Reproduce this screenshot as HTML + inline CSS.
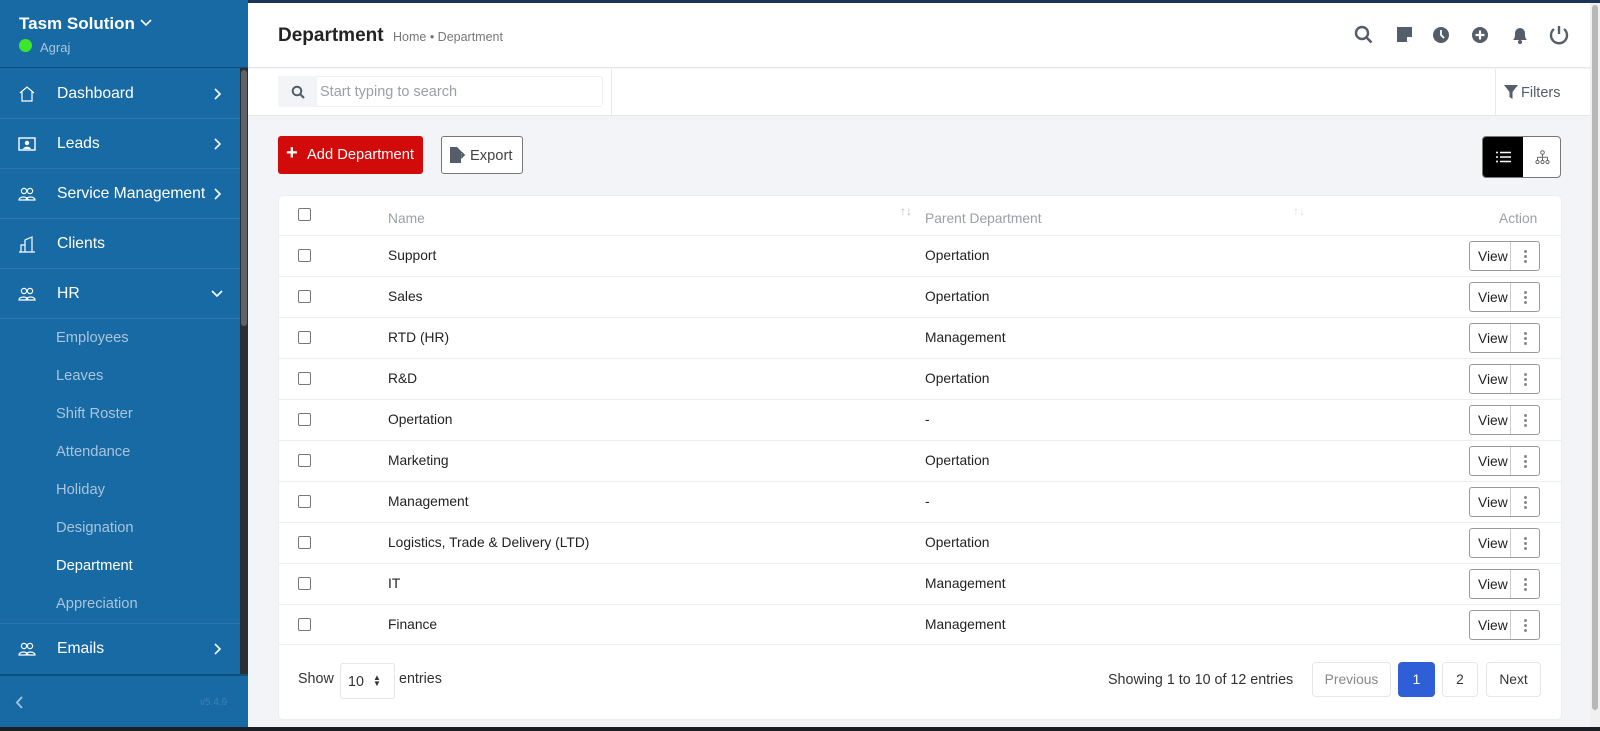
<!DOCTYPE html>
<html><head><meta charset="utf-8"><style>
*{box-sizing:border-box;margin:0;padding:0}
body{width:1600px;height:731px;overflow:hidden;font-family:"Liberation Sans",sans-serif;background:#f2f4f7;position:relative}
.abs{position:absolute}
#sb{left:0;top:0;width:248px;height:731px;background:#176aa3}
.mi{position:absolute;left:0;width:240px;height:50px;border-bottom:1px solid #2a79b0;color:#fff;font-size:15.7px}
.mi span.t{position:absolute;left:57px;top:50%;transform:translateY(-50%)}
.mi svg.ic{position:absolute;left:18px;top:50%;transform:translateY(-50%)}
.mi .ch{position:absolute;left:214px;top:50%;transform:translateY(-50%)}
.sub{position:absolute;left:56px;color:#a9c4dc;font-size:14.7px;transform:translateY(-50%)}
.row{position:absolute;left:278px;width:1284px;height:41px;border-top:1px solid #eceef1;font-size:13.8px;color:#222}
.row .cb{position:absolute;left:20px;top:13px;width:13px;height:13px;border:1px solid #777;border-radius:2px;background:#fff}
.row .n{position:absolute;left:110px;top:12px}
.row .p{position:absolute;left:647px;top:12px}
.row .vb{position:absolute;left:1191px;top:5px;width:71px;height:30px;border:1px solid #9a9a9a;border-radius:3px;background:#fff}
.vb span{position:absolute;left:8px;top:7px;font-size:13.8px}
.vb i{position:absolute;left:40px;top:0;width:1px;height:28px;background:#ccc}
.vb b{position:absolute;left:54px;width:3px;height:3px;border-radius:50%;background:#888}
.pg{position:absolute;top:662px;height:35px;border:1px solid #e4e6ea;border-radius:4px;background:#fff;font-size:13.8px;color:#333;text-align:center;line-height:33px}
</style></head><body>
<div class="abs" style="left:0;top:0;width:1600px;height:3px;background:#1d3358"></div>
<div id="sb" class="abs">
 <div class="abs" style="left:0;top:3px;width:248px;height:65px;border-bottom:1px solid #0f4f7c"></div>
 <div class="abs" style="left:19px;top:14px;color:#fff;font-size:17px;font-weight:bold">Tasm Solution</div>
 <svg class="abs" style="left:140px;top:19px" width="12" height="8" viewBox="0 0 12 8"><path d="M1 1l5 5 5-5" stroke="#fff" stroke-width="1.6" fill="none"/></svg>
 <div class="abs" style="left:19px;top:39px;width:13px;height:13px;border-radius:50%;background:#3ee62a"></div>
 <div class="abs" style="left:40px;top:40px;color:#aac6de;font-size:13px">Agraj</div>
 <div class="mi" style="top:69px"><svg class="ic" width="18" height="18" viewBox="0 0 18 18"><path d="M2 8L9 2l7 6M4 7v9h10V7" stroke="#fff" stroke-width="1.2" fill="none"/></svg><span class="t">Dashboard</span><svg class="ch" width="8" height="12" viewBox="0 0 8 12"><path d="M1 1l5 5-5 5" stroke="#fff" stroke-width="1.6" fill="none"/></svg></div>
 <div class="mi" style="top:119px"><svg class="ic" width="18" height="16" viewBox="0 0 18 16"><rect x="1" y="2" width="16" height="12" stroke="#fff" stroke-width="1.4" fill="none"/><circle cx="9" cy="7" r="2.2" fill="#fff"/><path d="M5 13c1-3 7-3 8 0z" fill="#fff"/></svg><span class="t">Leads</span><svg class="ch" width="8" height="12" viewBox="0 0 8 12"><path d="M1 1l5 5-5 5" stroke="#fff" stroke-width="1.6" fill="none"/></svg></div>
 <div class="mi" style="top:169px"><svg class="ic" width="18" height="16" viewBox="0 0 18 16"><circle cx="6" cy="5" r="2.6" stroke="#fff" stroke-width="1.2" fill="none"/><circle cx="12" cy="5" r="2.6" stroke="#fff" stroke-width="1.2" fill="none"/><path d="M1 14c0-4 9-4 9 0zM8 14c0-4 9-4 9 0z" stroke="#fff" stroke-width="1.2" fill="none"/></svg><span class="t">Service Management</span><svg class="ch" width="8" height="12" viewBox="0 0 8 12"><path d="M1 1l5 5-5 5" stroke="#fff" stroke-width="1.6" fill="none"/></svg></div>
 <div class="mi" style="top:219px"><svg class="ic" width="18" height="18" viewBox="0 0 18 18"><path d="M1 17h16M3 17V10h4v7M7 17V5l7-3v15" stroke="#fff" stroke-width="1.2" fill="none"/></svg><span class="t">Clients</span></div>
 <div class="mi" style="top:269px"><svg class="ic" width="18" height="16" viewBox="0 0 18 16"><circle cx="6" cy="5" r="2.6" stroke="#fff" stroke-width="1.2" fill="none"/><circle cx="12" cy="5" r="2.6" stroke="#fff" stroke-width="1.2" fill="none"/><path d="M1 14c0-4 9-4 9 0zM8 14c0-4 9-4 9 0z" stroke="#fff" stroke-width="1.2" fill="none"/></svg><span class="t">HR</span><svg class="ch" width="12" height="8" viewBox="0 0 12 8" style="left:211px"><path d="M1 1l5 5 5-5" stroke="#fff" stroke-width="1.6" fill="none"/></svg></div>
 <div class="sub" style="top:338px">Employees</div>
 <div class="sub" style="top:376px">Leaves</div>
 <div class="sub" style="top:414px">Shift Roster</div>
 <div class="sub" style="top:452px">Attendance</div>
 <div class="sub" style="top:490px">Holiday</div>
 <div class="sub" style="top:528px">Designation</div>
 <div class="sub" style="top:566px;color:#fff">Department</div>
 <div class="sub" style="top:604px">Appreciation</div>
 <div class="abs" style="left:0;top:623px;width:240px;height:1px;background:#2a79b0"></div>
 <div class="mi" style="top:624px;border:none"><svg class="ic" width="18" height="16" viewBox="0 0 18 16"><circle cx="6" cy="5" r="2.6" stroke="#fff" stroke-width="1.2" fill="none"/><circle cx="12" cy="5" r="2.6" stroke="#fff" stroke-width="1.2" fill="none"/><path d="M1 14c0-4 9-4 9 0zM8 14c0-4 9-4 9 0z" stroke="#fff" stroke-width="1.2" fill="none"/></svg><span class="t">Emails</span><svg class="ch" width="8" height="12" viewBox="0 0 8 12"><path d="M1 1l5 5-5 5" stroke="#fff" stroke-width="1.6" fill="none"/></svg></div>
 <div class="abs" style="left:240px;top:68px;width:8px;height:607px;background:#2b2f34"></div>
 <div class="abs" style="left:241px;top:70px;width:6px;height:256px;background:#5f6368;border-radius:3px"></div>
 <div class="abs" style="left:0;top:674px;width:248px;height:2px;background:#0f4f7c"></div>
 <svg class="abs" style="left:15px;top:696px" width="9" height="13" viewBox="0 0 9 13"><path d="M7 1L2 6.5 7 12" stroke="#9fc0da" stroke-width="2" fill="none"/></svg>
 <div class="abs" style="left:200px;top:697px;color:#3c82b8;font-size:10px">v5.4.9</div>
</div>
<div class="abs" style="left:248px;top:3px;width:1342px;height:65px;background:#fff;border-bottom:1px solid #e6e8eb"></div>
<div class="abs" style="left:278px;top:25px;font-size:19px;font-weight:bold;color:#222">Department</div>
<div class="abs" style="left:393px;top:30px;font-size:12.5px;color:#777">Home • Department</div>
<svg class="abs" style="left:1354px;top:25px" width="270" height="20" viewBox="0 0 270 20">
 <circle cx="8" cy="8" r="6" stroke="#555d6a" stroke-width="2.4" fill="none"/><path d="M12.5 12.5l5 5" stroke="#555d6a" stroke-width="2.6"/>
 <path d="M43 2h15v10l-5 5H43z" fill="#555d6a"/><path d="M53 17v-5h5" fill="#fff"/>
 <circle cx="87" cy="10" r="8" fill="#555d6a"/><path d="M87 5v5l3 3" stroke="#fff" stroke-width="1.8" fill="none"/>
 <circle cx="126" cy="10" r="8" fill="#555d6a"/><path d="M126 5.5v9M121.5 10h9" stroke="#fff" stroke-width="2.2"/>
 <path d="M159 15c2-2 2-4 2-7a5 5 0 0110 0c0 3 0 5 2 7z" fill="#555d6a"/><circle cx="166" cy="17" r="2" fill="#555d6a"/>
 <path d="M200 4a8 8 0 1010 0" stroke="#555d6a" stroke-width="2.4" fill="none"/><path d="M205 1v8" stroke="#555d6a" stroke-width="2.4"/>
</svg>
<div class="abs" style="left:248px;top:69px;width:1342px;height:47px;background:#fff;border-bottom:1px solid #e4e6ea"></div>
<div class="abs" style="left:278px;top:76px;width:325px;height:31px;border:1px solid #eef0f3;border-radius:3px;background:#fff"></div>
<div class="abs" style="left:278px;top:76px;width:39px;height:31px;background:#f2f4f7"></div>
<svg class="abs" style="left:291px;top:85px" width="14" height="14" viewBox="0 0 14 14"><circle cx="6" cy="6" r="4.3" stroke="#555d6a" stroke-width="2" fill="none"/><path d="M9 9l4 4" stroke="#555d6a" stroke-width="2.2"/></svg>
<div class="abs" style="left:320px;top:84px;font-size:14.5px;color:#9aa0a8">Start typing to search</div>
<div class="abs" style="left:611px;top:69px;width:1px;height:47px;background:#e6e8eb"></div>
<div class="abs" style="left:1495px;top:69px;width:1px;height:47px;background:#e6e8eb"></div>
<svg class="abs" style="left:1504px;top:85px" width="14" height="14" viewBox="0 0 14 14"><path d="M0 0h14L8.5 7v7L5.5 12V7z" fill="#555d6a"/></svg>
<div class="abs" style="left:1521px;top:85px;font-size:14.5px;color:#555d6a">Filters</div>
<div class="abs" style="left:278px;top:136px;width:145px;height:38px;background:#d30a0a;border-radius:3px;color:#fff;font-size:14.7px"><span class="abs" style="left:8px;top:6px;font-size:20px;font-weight:bold">+</span><span class="abs" style="left:29px;top:11px">Add Department</span></div>
<div class="abs" style="left:441px;top:136px;width:82px;height:38px;border:1px solid #777;border-radius:3px;background:#fff;font-size:14.7px;color:#444">
 <svg class="abs" style="left:8px;top:10px" width="17" height="16" viewBox="0 0 17 16"><path d="M0 0h7l4 4v12H0z" fill="#555d6a"/><path d="M7 8h6M11 5l3 3-3 3" stroke="#555d6a" stroke-width="1.8" fill="none"/></svg>
 <span class="abs" style="left:28px;top:11px">Export</span></div>
<div class="abs" style="left:1482px;top:136px;width:79px;height:42px;border:1px solid #777;border-radius:4px;background:#fff;overflow:hidden">
 <div class="abs" style="left:0;top:0;width:40px;height:42px;background:#000"></div>
 <svg class="abs" style="left:13px;top:14px" width="15" height="12" viewBox="0 0 15 12"><path d="M4 1.5h11M4 6h11M4 10.5h11" stroke="#fff" stroke-width="1.4"/><circle cx="1" cy="1.5" r="1" fill="#fff"/><circle cx="1" cy="6" r="1" fill="#fff"/><circle cx="1" cy="10.5" r="1" fill="#fff"/></svg>
 <svg class="abs" style="left:52px;top:13px" width="15" height="15" viewBox="0 0 15 15"><circle cx="7.5" cy="2.5" r="1.8" stroke="#666" fill="none"/><path d="M7.5 4.3v3M2.5 7.3h10M2.5 7.3v3M7.5 7.3v3M12.5 7.3v3" stroke="#666"/><circle cx="2.5" cy="12" r="1.6" stroke="#666" fill="none"/><circle cx="7.5" cy="12" r="1.6" stroke="#666" fill="none"/><circle cx="12.5" cy="12" r="1.6" stroke="#666" fill="none"/></svg>
</div>
<div class="abs" style="left:278px;top:195px;width:1284px;height:525px;background:#fff;border-radius:5px;border:1px solid #eceef1"></div>
<div class="abs" style="left:298px;top:208px;width:13px;height:13px;border:1px solid #777;border-radius:2px;background:#fff"></div>
<div class="abs" style="left:388px;top:211px;font-size:13.8px;color:#9aa0a8">Name</div>
<div class="abs" style="left:900px;top:204px;font-size:12px;color:#bbb">↑↓</div>
<div class="abs" style="left:925px;top:211px;font-size:13.8px;color:#9aa0a8">Parent Department</div>
<div class="abs" style="left:1293px;top:204px;font-size:12px;color:#ddd">↑↓</div>
<div class="abs" style="left:1499px;top:211px;font-size:13.8px;color:#9aa0a8">Action</div>

<div class="row" style="top:235px"><div class="cb"></div><div class="n">Support</div><div class="p">Opertation</div><div class="vb"><span>View</span><i></i><b style="top:8px"></b><b style="top:13px"></b><b style="top:18px"></b></div></div>
<div class="row" style="top:276px"><div class="cb"></div><div class="n">Sales</div><div class="p">Opertation</div><div class="vb"><span>View</span><i></i><b style="top:8px"></b><b style="top:13px"></b><b style="top:18px"></b></div></div>
<div class="row" style="top:317px"><div class="cb"></div><div class="n">RTD (HR)</div><div class="p">Management</div><div class="vb"><span>View</span><i></i><b style="top:8px"></b><b style="top:13px"></b><b style="top:18px"></b></div></div>
<div class="row" style="top:358px"><div class="cb"></div><div class="n">R&amp;D</div><div class="p">Opertation</div><div class="vb"><span>View</span><i></i><b style="top:8px"></b><b style="top:13px"></b><b style="top:18px"></b></div></div>
<div class="row" style="top:399px"><div class="cb"></div><div class="n">Opertation</div><div class="p">-</div><div class="vb"><span>View</span><i></i><b style="top:8px"></b><b style="top:13px"></b><b style="top:18px"></b></div></div>
<div class="row" style="top:440px"><div class="cb"></div><div class="n">Marketing</div><div class="p">Opertation</div><div class="vb"><span>View</span><i></i><b style="top:8px"></b><b style="top:13px"></b><b style="top:18px"></b></div></div>
<div class="row" style="top:481px"><div class="cb"></div><div class="n">Management</div><div class="p">-</div><div class="vb"><span>View</span><i></i><b style="top:8px"></b><b style="top:13px"></b><b style="top:18px"></b></div></div>
<div class="row" style="top:522px"><div class="cb"></div><div class="n">Logistics, Trade &amp; Delivery (LTD)</div><div class="p">Opertation</div><div class="vb"><span>View</span><i></i><b style="top:8px"></b><b style="top:13px"></b><b style="top:18px"></b></div></div>
<div class="row" style="top:563px"><div class="cb"></div><div class="n">IT</div><div class="p">Management</div><div class="vb"><span>View</span><i></i><b style="top:8px"></b><b style="top:13px"></b><b style="top:18px"></b></div></div>
<div class="row" style="top:604px;border-bottom:1px solid #eceef1"><div class="cb"></div><div class="n">Finance</div><div class="p">Management</div><div class="vb"><span>View</span><i></i><b style="top:8px"></b><b style="top:13px"></b><b style="top:18px"></b></div></div>

<div class="abs" style="left:298px;top:671px;font-size:14.3px;color:#333">Show</div>
<div class="abs" style="left:340px;top:663px;width:55px;height:36px;border:1px solid #e4e6ea;border-radius:3px;font-size:14.3px;color:#333"><span class="abs" style="left:7px;top:10px">10</span><span class="abs" style="left:32px;top:11px;font-size:8px;line-height:6px">▲<br>▼</span></div>
<div class="abs" style="left:399px;top:671px;font-size:14.3px;color:#333">entries</div>
<div class="abs" style="left:1108px;top:672px;font-size:14.3px;color:#333">Showing 1 to 10 of 12 entries</div>
<div class="pg" style="left:1312px;width:79px;color:#888">Previous</div>
<div class="pg" style="left:1398px;width:37px;background:#2f5fd6;border-color:#2f5fd6;color:#fff">1</div>
<div class="pg" style="left:1442px;width:36px">2</div>
<div class="pg" style="left:1486px;width:55px">Next</div>

<div class="abs" style="left:1590px;top:3px;width:10px;height:724px;background:#f0f0f0"></div>
<div class="abs" style="left:1592px;top:5px;width:6px;height:705px;background:#b8b8b8;border-radius:3px"></div>
<div class="abs" style="left:0;top:727px;width:1600px;height:4px;background:#1b1e22"></div>
</body></html>
